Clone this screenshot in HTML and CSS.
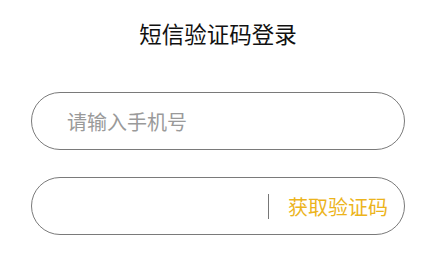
FILE: index.html
```html
<!DOCTYPE html>
<html lang="zh-CN">
<head>
<meta charset="utf-8">
<link rel="stylesheet" href="styles.css">
</head>
<body>
<div class="page">
  <h1 class="title">短信验证码登录</h1>
  <div class="field">
    <span class="placeholder">请输入手机号</span>
  </div>
  <div class="field field-code">
    <span class="grow"></span>
    <span class="divider"></span>
    <span class="get-code">获取验证码</span>
  </div>
</div>
</body>
</html>
```
FILE: styles.css
```css
html, body {
  margin: 0;
  padding: 0;
  background: #fff;
}
body {
  font-family: "Noto Sans CJK SC", "Noto Sans", sans-serif;
}
.page {
  width: 374px;
  margin-left: 31px;
  padding-top: 18px;
  display: flex;
  flex-direction: column;
}
.title {
  margin: 0 0 44px;
  font-size: 22.5px;
  line-height: 30px;
  font-weight: 400;
  color: #111;
  text-align: center;
}
.field {
  box-sizing: border-box;
  height: 58px;
  border: 1px solid #7a7a7a;
  border-radius: 29px;
  display: flex;
  align-items: center;
  padding: 0 16px 0 35px;
  margin-bottom: 27px;
}
.placeholder {
  font-size: 20px;
  color: #9a9a9a;
}
.grow {
  flex: 1;
}
.divider {
  width: 1px;
  height: 25px;
  background: #777;
  margin-right: 19px;
}
.get-code {
  font-size: 20px;
  color: #ecb41c;
}
```
